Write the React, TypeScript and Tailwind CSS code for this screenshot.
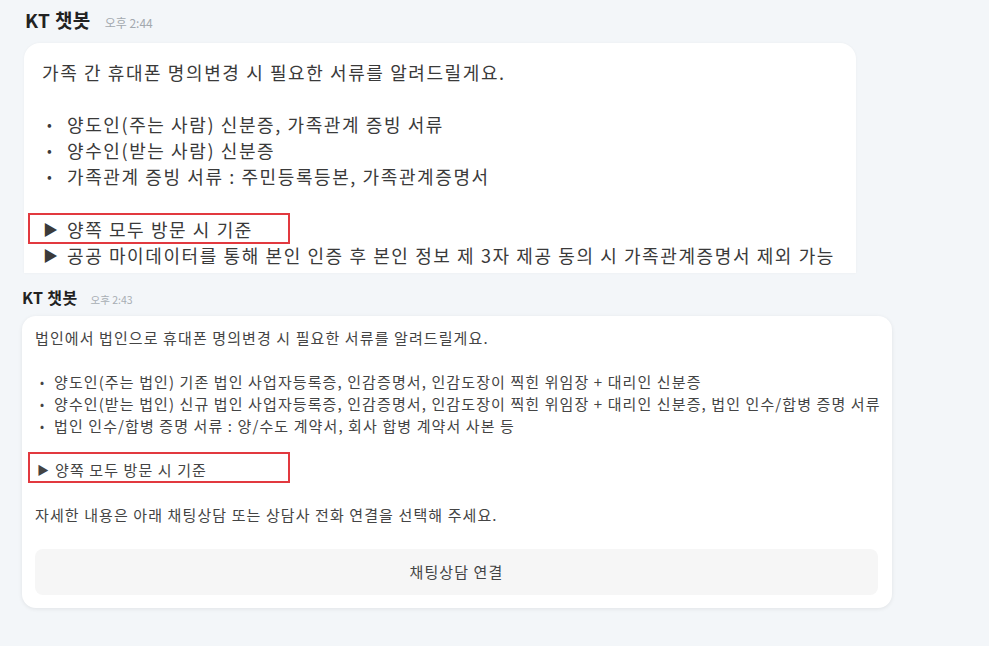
import React from "react";

const font = { fontFamily: '"Noto Sans CJK KR", "Noto Sans", sans-serif' };

export default function App() {
  return (
    <div className="w-[989px] h-[646px] overflow-hidden bg-[#f3f6f9] text-[#333]" style={font}>
      {/* first capture */}
      <div className="h-[273px] pl-[24px] pt-[6px] flex flex-col">
        <div className="flex items-baseline gap-[14px] h-[37px] pl-[1px]">
          <span className="text-[19px] tracking-[0.4px] font-bold text-[#222] leading-[28px]">KT 챗봇</span>
          <span className="text-[12px] text-[#a3a9af]">오후 2:44</span>
        </div>
        <div className="w-[832px] flex-1 bg-white rounded-t-[16px] shadow-[0_0_3px_rgba(0,0,0,0.04)] pt-[16px] pl-[18px] text-[18px] tracking-[1.6px] leading-[26px] text-[#3a3a3a]">
          <div className="whitespace-nowrap">가족 간 휴대폰 명의변경 시 필요한 서류를 알려드릴게요.</div>
          <div className="h-[26px]" />
          {["양도인(주는 사람) 신분증, 가족관계 증빙 서류", "양수인(받는 사람) 신분증", "가족관계 증빙 서류 : 주민등록등본, 가족관계증명서"].map((t) => (
            <div key={t} className="flex whitespace-nowrap">
              <span className="w-[25px] shrink-0 pl-[5px] text-[14px]">•</span>
              <span>{t}</span>
            </div>
          ))}
          <div className="h-[26px]" />
          <div className="relative flex whitespace-nowrap mt-[1px]">
            <span className="w-[25px] shrink-0 pl-[1px] text-[15px]">▶</span>
            <span>양쪽 모두 방문 시 기준</span>
            <div className="pointer-events-none absolute left-[-14px] top-[-3px] h-[31px] w-[262px] border-2 border-[#e2393f]" />
          </div>
          <div className="flex whitespace-nowrap">
            <span className="w-[25px] shrink-0 pl-[1px] text-[15px]">▶</span>
            <span>공공 마이데이터를 통해 본인 인증 후 본인 정보 제 3자 제공 동의 시 가족관계증명서 제외 가능</span>
          </div>
        </div>
      </div>

      {/* second capture */}
      <div className="pl-[22px] pt-[12px]">
        <div className="flex items-baseline gap-[13px] h-[31px]">
          <span className="text-[16px] tracking-[0.4px] font-bold text-[#222] leading-[24px]">KT 챗봇</span>
          <span className="text-[10.5px] text-[#a8aeb4]">오후 2:43</span>
        </div>
        <div className="w-[870px] h-[292px] bg-white rounded-[14px] shadow-[0_1px_4px_rgba(0,0,0,0.08)] pt-[11px] pl-[13px] pr-[14px] text-[15px] tracking-[1.1px] leading-[22px] text-[#444]">
          <div className="whitespace-nowrap">법인에서 법인으로 휴대폰 명의변경 시 필요한 서류를 알려드릴게요.</div>
          <div className="h-[22px]" />
          {[
            "양도인(주는 법인) 기존 법인 사업자등록증, 인감증명서, 인감도장이 찍힌 위임장 + 대리인 신분증",
            "양수인(받는 법인) 신규 법인 사업자등록증, 인감증명서, 인감도장이 찍힌 위임장 + 대리인 신분증, 법인 인수/합병 증명 서류",
            "법인 인수/합병 증명 서류 : 양/수도 계약서, 회사 합병 계약서 사본 등",
          ].map((t) => (
            <div key={t} className="flex whitespace-nowrap">
              <span className="w-[19px] shrink-0 pl-[5px] text-[12px]">•</span>
              <span>{t}</span>
            </div>
          ))}
          <div className="h-[22px]" />
          <div className="relative flex whitespace-nowrap">
            <span className="w-[20px] shrink-0 pl-[2px] text-[12px]">▶</span>
            <span>양쪽 모두 방문 시 기준</span>
            <div className="pointer-events-none absolute left-[-7px] top-[-7px] h-[31px] w-[262px] border-2 border-[#e2393f]" />
          </div>
          <div className="h-[23px]" />
          <div className="whitespace-nowrap">자세한 내용은 아래 채팅상담 또는 상담사 전화 연결을 선택해 주세요.</div>
          <div className="mt-[23px] h-[46px] w-[843px] rounded-[8px] bg-[#f6f6f6] flex items-center justify-center text-[#444]">
            채팅상담 연결
          </div>
        </div>
      </div>
    </div>
  );
}
